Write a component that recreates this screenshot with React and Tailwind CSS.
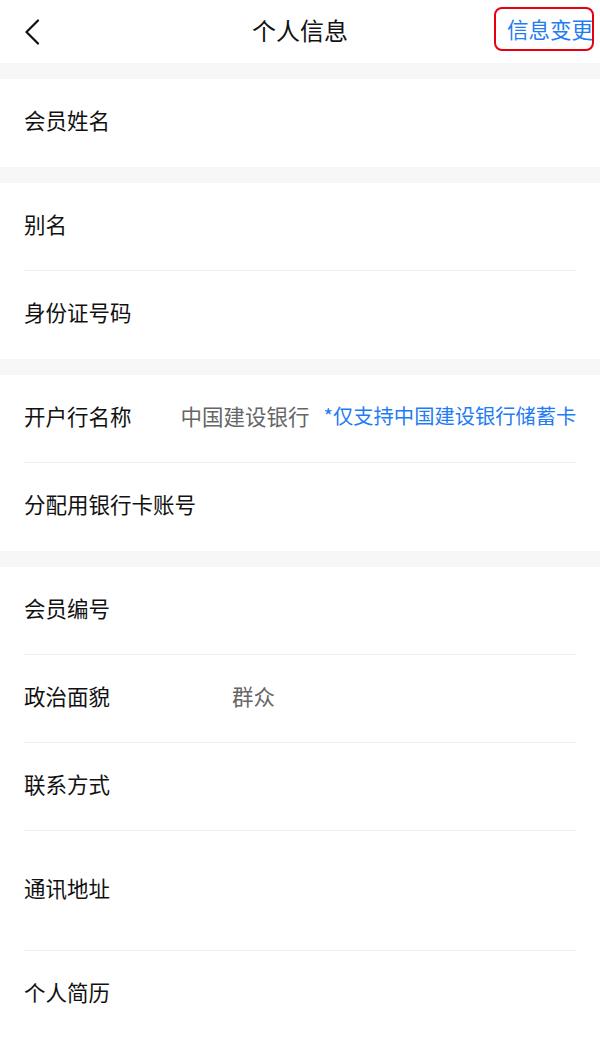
import React from "react";

const font = { fontFamily: '"Noto Sans CJK SC", "Noto Sans", sans-serif' };

const Row = ({ label, divider = false, tall = false, children }) => (
  <div className={`bg-white px-6 ${tall ? "h-[120px]" : "h-[88px]"}`}>
    <div
      className={`h-full flex items-center pb-[6px] ${
        divider ? "border-b border-[#f1f1f1]" : ""
      }`}
    >
      <span className="text-[21.5px] text-[#111] leading-none whitespace-nowrap">
        {label}
      </span>
      {children}
    </div>
  </div>
);

const Band = () => <div className="h-4 bg-[#f8f7f8]" />;

export default function App() {
  return (
    <div className="w-[600px] h-[1039px] bg-white overflow-hidden" style={font}>
      {/* Header */}
      <header className="relative h-[63px] flex items-center justify-center pb-[4px]">
        <button className="absolute left-[20px] top-[15px] p-1">
          <svg width="16" height="26" viewBox="0 0 16 26" fill="none">
            <polyline
              points="14,1.5 2.5,13 14,24.5"
              stroke="#111"
              strokeWidth="2.2"
              strokeLinecap="round"
              strokeLinejoin="round"
            />
          </svg>
        </button>
        <h1 className="text-[24px] text-[#111] leading-none">个人信息</h1>
        <div className="absolute right-[6px] top-[7px] w-[100px] h-[44px] border-[2.5px] border-[#e8000f] rounded-lg flex items-center pl-[11px] pb-[1px]">
          <span className="text-[21.5px] text-[#1f7cf2] leading-none whitespace-nowrap">
            信息变更
          </span>
        </div>
      </header>

      <Band />
      <Row label="会员姓名" />
      <Band />
      <Row label="别名" divider />
      <Row label="身份证号码" />
      <Band />
      <Row label="开户行名称" divider>
        <span className="ml-[49px] text-[21.5px] text-[#666] leading-none whitespace-nowrap">
          中国建设银行
        </span>
        <span className="ml-[14px] text-[20.3px] text-[#1f7cf2] leading-none whitespace-nowrap">
          *仅支持中国建设银行储蓄卡
        </span>
      </Row>
      <Row label="分配用银行卡账号" />
      <Band />
      <Row label="会员编号" divider />
      <Row label="政治面貌" divider>
        <span className="ml-[122px] text-[21.5px] text-[#666] leading-none">群众</span>
      </Row>
      <Row label="联系方式" divider />
      <Row label="通讯地址" divider tall />
      <Row label="个人简历" />
    </div>
  );
}
